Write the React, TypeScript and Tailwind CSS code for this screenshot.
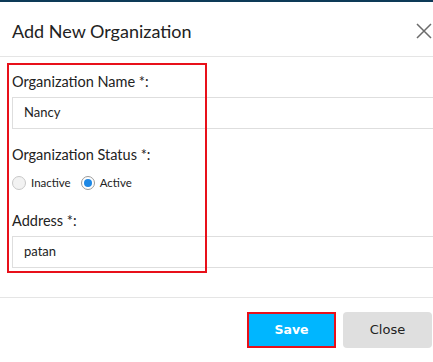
import React from "react";

export default function App() {
  return (
    <div className="w-[433px] h-[362px] bg-white overflow-hidden relative" style={{ fontFamily: "Lato, 'Open Sans', sans-serif" }}>
      <div className="h-[2px] bg-[#0d3a57]" />
      <div className="h-[55px] border-b border-[#e5e5e5] flex items-center justify-between pl-[12px] pr-[1px]">
        <h1 className="text-[18px] text-[#222] leading-none mt-[3px]">Add New Organization</h1>
        <svg width="16" height="16" viewBox="0 0 16 16" className="mt-[3px]">
          <path d="M1 1 L15 15 M15 1 L1 15" stroke="#6b6b6b" strokeWidth="1.5" />
        </svg>
      </div>
      <div className="relative">
        <div className="absolute left-[7px] top-[6px] w-[200px] h-[210px] border-2 border-[#e8101a] pointer-events-none z-10" />
        <div className="pl-[12px] pt-[15px]">
          <div className="text-[14.5px] text-[#222] leading-[20px]">Organization Name *:</div>
          <div className="mt-[5px] h-[32px] w-[430px] border border-[#dedede] flex items-center pl-[11px] text-[13px] text-[#222]">Nancy</div>
          <div className="mt-[16px] text-[14.5px] text-[#222] leading-[20px]">Organization Status *:</div>
          <div className="mt-[10px] flex items-center text-[11.5px] text-[#222] h-[16px]">
            <span className="w-[14px] h-[14px] rounded-full border border-[#c8c8c8] bg-[#f2f2f2]" />
            <span className="ml-[5px]">Inactive</span>
            <span className="ml-[10px] w-[14px] h-[14px] rounded-full border border-[#9a9a9a] bg-white flex items-center justify-center">
              <span className="w-[8px] h-[8px] rounded-full bg-[#1e88e5]" />
            </span>
            <span className="ml-[5px]">Active</span>
          </div>
          <div className="mt-[20px] text-[14.5px] text-[#222] leading-[20px]">Address *:</div>
          <div className="mt-[5px] h-[32px] w-[430px] border border-[#dedede] flex items-center pl-[11px] text-[13px] text-[#222]">patan</div>
        </div>
      </div>
      <div className="mt-[29px] border-t border-[#e5e5e5] flex justify-end pt-[14px] pr-[1px] gap-[7px]">
        <button className="w-[89px] h-[36px] bg-[#00b6ff] border-2 border-[#e8101a] text-white font-bold text-[12.5px]" style={{ fontFamily: "'DejaVu Sans', Verdana, sans-serif" }}>Save</button>
        <button className="w-[89px] h-[36px] bg-[#dfdfdf] rounded-[4px] text-[#222] text-[13px]" style={{ fontFamily: "'DejaVu Sans', Verdana, sans-serif" }}>Close</button>
      </div>
    </div>
  );
}
